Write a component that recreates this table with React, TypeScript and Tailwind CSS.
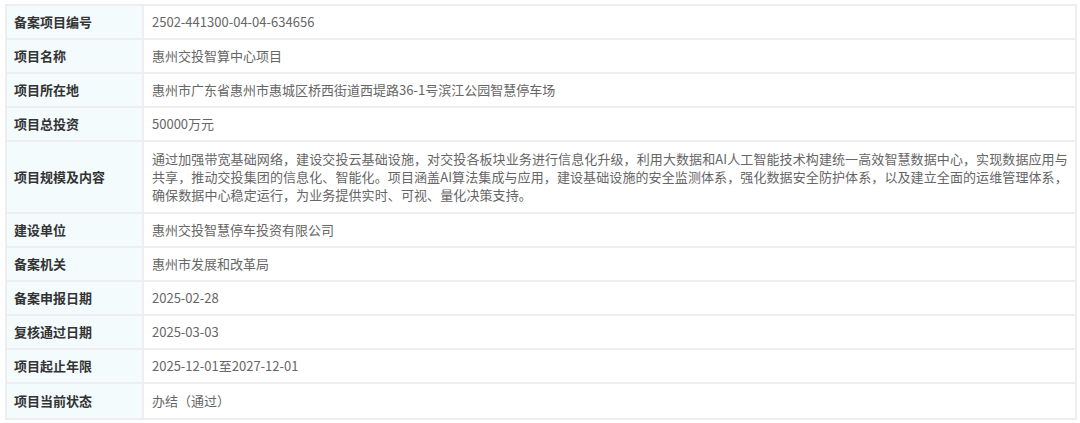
const rows: { label: string; value: React.ReactNode; tall?: boolean }[] = [
  { label: '备案项目编号', value: '2502-441300-04-04-634656' },
  { label: '项目名称', value: '惠州交投智算中心项目' },
  { label: '项目所在地', value: '惠州市广东省惠州市惠城区桥西街道西堤路36-1号滨江公园智慧停车场' },
  { label: '项目总投资', value: '50000万元' },
  {
    label: '项目规模及内容',
    tall: true,
    value: (
      <>
        通过加强带宽基础网络，建设交投云基础设施，对交投各板块业务进行信息化升级，利用大数据和AI人工智能技术构建统一高效智慧数据中心，实现数据应用与
        <br />
        共享，推动交投集团的信息化、智能化。项目涵盖AI算法集成与应用，建设基础设施的安全监测体系，强化数据安全防护体系，以及建立全面的运维管理体系，
        <br />
        确保数据中心稳定运行，为业务提供实时、可视、量化决策支持。
      </>
    ),
  },
  { label: '建设单位', value: '惠州交投智慧停车投资有限公司' },
  { label: '备案机关', value: '惠州市发展和改革局' },
  { label: '备案申报日期', value: '2025-02-28' },
  { label: '复核通过日期', value: '2025-03-03' },
  { label: '项目起止年限', value: '2025-12-01至2027-12-01' },
  { label: '项目当前状态', value: '办结（通过）' },
];

export default function App() {
  return (
    <div
      className="w-[1080px] h-[423px] bg-white pt-[4px] pl-[5px]"
      style={{ fontFamily: '"Noto Sans CJK SC", "Noto Sans", sans-serif' }}
    >
      <div className="w-[1072px] border-2 border-[#eeeeee]">
        {rows.map((row, i) => (
          <div
            key={row.label}
            className={`flex ${i < rows.length - 1 ? 'border-b-2 border-[#eeeeee]' : ''} ${
              row.tall ? 'h-[72px]' : 'h-[34px]'
            }`}
          >
            <div className="w-[137px] shrink-0 flex items-center pl-[7px] bg-[#f3fbfd] border-r-2 border-[#eeeeee] text-[13px] font-bold text-[#333333]">
              {row.label}
            </div>
            <div className="flex-1 flex items-center pl-[8px] text-[13px] text-[#666666] leading-[18px] whitespace-nowrap">
              <div className={row.tall ? 'tracking-[0.1px]' : ''}>{row.value}</div>
            </div>
          </div>
        ))}
      </div>
    </div>
  );
}
